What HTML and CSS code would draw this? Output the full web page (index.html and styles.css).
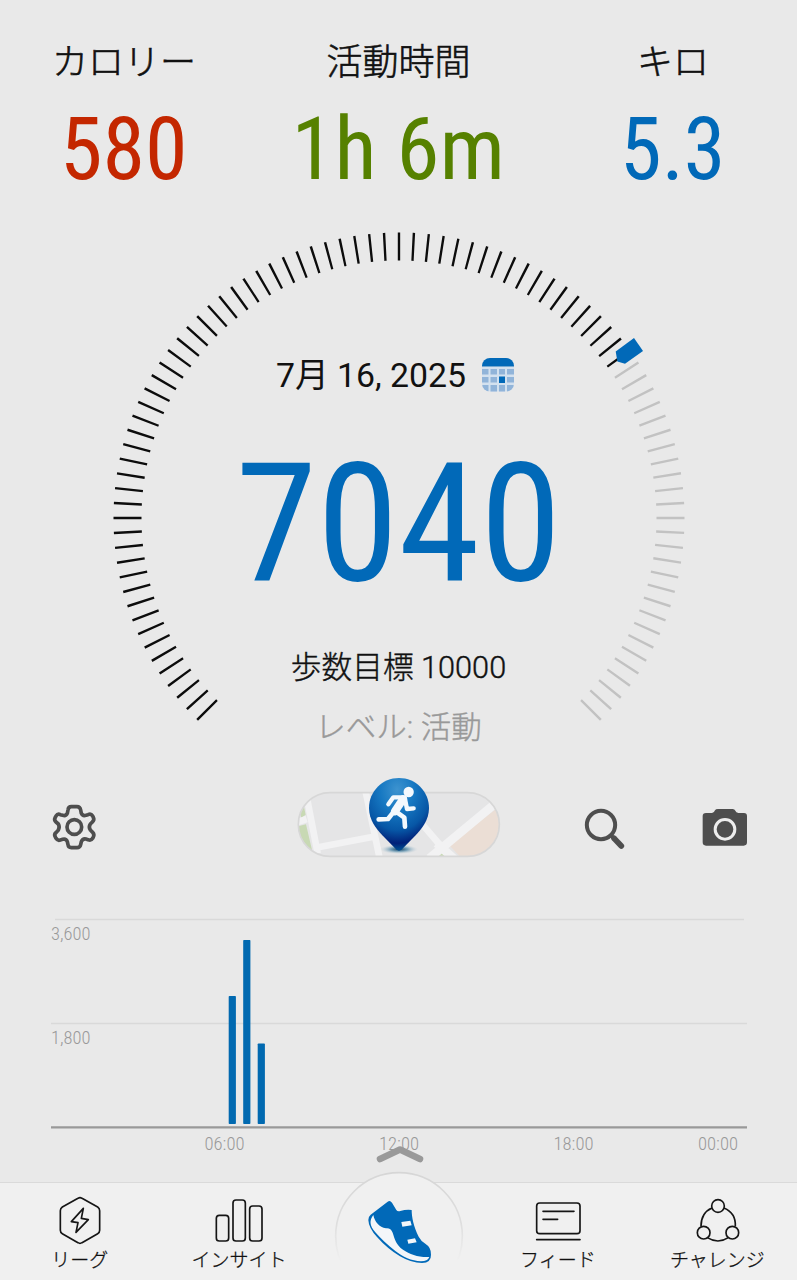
FILE: index.html
```html
<!DOCTYPE html>
<html lang="ja">
<head>
<meta charset="utf-8">
<title>歩数計</title>
<link rel="stylesheet" href="styles.css">
</head>
<body>
<main class="app">
  <header class="stats">
    <div class="stat">
      <div class="stat-label">カロリー</div>
      <svg class="stat-value red" width="240" height="114" viewBox="0 0 240 114"><text x="56" y="86.500" textLength="127.500" lengthAdjust="spacingAndGlyphs">580</text></svg>
    </div>
    <div class="stat">
      <div class="stat-label">活動時間</div>
      <svg class="stat-value green" width="240" height="114" viewBox="0 0 240 114"><text x="12.500" y="86.500" textLength="213.500" lengthAdjust="spacingAndGlyphs">1h 6m</text></svg>
    </div>
    <div class="stat">
      <div class="stat-label">キロ</div>
      <svg class="stat-value blue" width="240" height="114" viewBox="0 0 240 114"><text x="67" y="86.500" textLength="105.500" lengthAdjust="spacingAndGlyphs">5.3</text></svg>
    </div>
  </header>

  <section class="gauge">
    <svg class="gauge-ring" width="797" height="550" viewBox="0 0 797 550">
      <path class="ticks done" pathLength="189.5" d="M207.86 500.82A271.5 271.5 0 1 1 619.34 149.38"/>
      <path class="ticks rest" pathLength="78.5" d="M626.05 159.14A271.5 271.5 0 0 1 590.14 500.82"/>
      <path fill="#0169b8" d="M634 128L643 141L625 153.700L617.400 151.600L615.700 141.500Z"/>
    </svg>
    <div class="gauge-body">
      <div class="date-row">
        <span class="date">7月 16, 2025</span>
        <svg width="34" height="36" viewBox="0 0 34 36">
          <clipPath id="cal"><rect x="1" y="0" width="32" height="33.500" rx="8"/></clipPath>
          <g clip-path="url(#cal)">
            <path fill="#d3e1ef" d="M0 9h34v26H0z"/>
            <path fill="#0169b8" d="M0 0h34v8.500H0z"/>
            <path fill="#91b4d9" d="M1 11h6.500v5.500H1zm8.500 0h6.500v5.500H9.500zm8.500 0h6v5.500h-6zm8 0h7v5.500h-7zM1 19h6.500v5.500H1zm8.500 0h6.500v5.500H9.500zm16.500 0h7v5.500h-7zM1 27h6.500v7H1zm8.500 0h6.500v7H9.500zm8.500 0h6v7h-6zm8 0h7v7h-7z"/>
            <path fill="#0169b8" d="M18 18.500h6v6.500h-6z"/>
          </g>
        </svg>
      </div>
      <svg class="steps" width="360" height="190" viewBox="0 -20 360 190"><text x="16.500" y="134" textLength="326" lengthAdjust="spacingAndGlyphs">7040</text></svg>
      <div class="goal">歩数目標 10000</div>
      <div class="level">レベル: 活動</div>
    </div>
  </section>

  <section class="tools">
    <svg class="gear" width="90" height="80" viewBox="0 0 270 240">
      <path class="tool-line" stroke-width="11" stroke-linejoin="round" d="M114 60Q115 50 124 50H141Q150 50 152 60L154 70Q158 79 168 76L174 74Q183 70 188 78L190 82Q194 90 187 96L181 102Q175 111 181 120L188 127Q194 133 190 141L188 145Q183 153 174 149L168 147Q158 145 154 155L152 164Q150 173 141 173H124Q115 173 114 164L112 155Q108 145 98 148L91 150Q83 153 78 145L76 141Q71 133 79 127L85 120Q90 111 85 102L78 96Q71 90 76 82L78 78Q83 70 91 74L98 76Q108 79 112 70Z"/>
      <circle class="tool-line" cx="133" cy="111" r="22" stroke-width="11"/>
    </svg>
    <svg class="map-pin" width="240" height="105" viewBox="0 0 720 315">
      <defs>
        <clipPath id="pill"><rect x="55" y="83" width="603" height="191" rx="95"/></clipPath>
        <radialGradient id="pin" cx=".47" cy=".16" r=".82"><stop offset="0" stop-color="#3d93cf"/><stop offset=".35" stop-color="#1678c2"/><stop offset=".68" stop-color="#0757a6"/><stop offset=".9" stop-color="#012078"/><stop offset="1" stop-color="#004a8e"/></radialGradient>
        <radialGradient id="shade"><stop offset="0" stop-color="#123b5b"/><stop offset=".45" stop-color="#558ba9" stop-opacity=".75"/><stop offset="1" stop-color="#c3d4dc" stop-opacity="0"/></radialGradient>
      </defs>
      <g clip-path="url(#pill)">
        <path fill="#e5e5e6" d="M50 80h620v200H50z"/>
        <path fill="#c8d9b4" d="M50 185L78 178L96 255H72L50 230ZM60 145L72 126L77 149L64 158ZM462 278L482 258L505 278Z"/>
        <path fill="#ebded5" d="M507 240L665 119V280H545Z"/>
        <path stroke="#f2f2f3" stroke-width="20" fill="none" d="M82 105L113 265M107 248L288 214M256 75L299 280M480 240L420 170"/>
        <path stroke="#f2f2f3" stroke-width="26" fill="none" d="M448 280L644 117M470 235L527 286"/>
        <path stroke="#f2f2f3" stroke-width="20" fill="none" d="M50 172L80 162"/>
      </g>
      <rect x="55" y="83" width="603" height="191" rx="95" fill="none" stroke="#d7d7d7" stroke-width="5"/>
      <ellipse cx="357" cy="253" rx="57" ry="14" fill="url(#shade)"/>
      <path fill="url(#pin)" d="M357 39C307 39 267 79 267 129C267 165 289 191 307 211L348 253Q357 261 366 253L407 211C425 191 447 165 447 129C447 79 407 39 357 39Z"/>
      <circle cx="386" cy="81" r="15.500" fill="#f4f9fd"/>
      <g fill="none" stroke="#f4f9fd" stroke-linecap="round" stroke-linejoin="round">
        <path stroke-width="13" d="M325 118L340 97H374L381 132L401 130"/>
        <path stroke-width="24" d="M369 103L345 139"/>
        <path stroke-width="14" d="M342 139L324 162L296 163M347 139L373 158L375 185"/>
      </g>
    </svg>
    <svg class="search" width="90" height="90" viewBox="0 0 270 270">
      <circle class="tool-line" cx="123" cy="135" r="42.500" stroke-width="12"/>
      <path class="tool-line" d="M154 167L161 174" stroke-width="11"/>
      <path class="tool-line" d="M162 175L184 198" stroke-width="17" stroke-linecap="round"/>
    </svg>
    <svg class="camera" width="90" height="90" viewBox="360 0 270 270">
      <path fill="#4e4e4e" d="M438 99H456Q463 98 465 91Q467 87 474 87H518Q524 87 526 92Q528 98 535 99H552Q561 99 561 108V187Q561 197 551 197H438Q428 197 428 187V108Q428 99 438 99Z"/>
      <circle cx="495" cy="148" r="29.500" fill="none" stroke="#ededed" stroke-width="9"/>
    </svg>
  </section>

  <section class="chart">
    <svg width="797" height="302" viewBox="0 880 797 302">
      <path stroke="#d9d9d9" stroke-width="1.500" d="M55 919.500H744M51 1023.500H747"/>
      <path stroke="#999" stroke-width="2.200" d="M51 1127.400H747"/>
      <g fill="#0169b0">
        <rect x="228.700" y="996" width="7.200" height="128" rx=".8"/>
        <rect x="243.200" y="940" width="7.200" height="184" rx=".8"/>
        <rect x="257.700" y="1043.500" width="7.200" height="80.500" rx=".8"/>
      </g>
      <g class="chart-text">
        <text x="51" y="940.300" textLength="39.500" lengthAdjust="spacingAndGlyphs">3,600</text>
        <text x="51" y="1044" textLength="39.500" lengthAdjust="spacingAndGlyphs">1,800</text>
        <text x="204.500" y="1150" textLength="40" lengthAdjust="spacingAndGlyphs">06:00</text>
        <text x="379" y="1150" textLength="40" lengthAdjust="spacingAndGlyphs">12:00</text>
        <text x="553.500" y="1150" textLength="40" lengthAdjust="spacingAndGlyphs">18:00</text>
        <text x="698" y="1150" textLength="40" lengthAdjust="spacingAndGlyphs">00:00</text>
      </g>
      <path fill="none" stroke="#999" stroke-width="6.500" stroke-linecap="round" stroke-linejoin="round" d="M380 1159L400 1149.500L420 1159"/>
    </svg>
  </section>

  <nav class="nav">
    <a class="tab">
      <svg width="60" height="60" viewBox="150 40 180 180">
        <g class="nav-line">
          <path d="M234 86Q240 82 246 86L293 112Q299 116 299 123V182Q299 189 293 192L246 219Q240 223 234 219L187 192Q181 189 181 182V123Q181 116 187 112Z"/>
          <path d="M250 116L214 156L234 159L228 188L265 150L244 146Z"/>
        </g>
      </svg>
      <span>リーグ</span>
    </a>
    <a class="tab">
      <svg width="60" height="60" viewBox="628 40 180 180">
        <g class="nav-line">
          <rect x="650" y="137" width="37" height="77" rx="9"/>
          <rect x="700" y="91" width="37" height="123" rx="9"/>
          <rect x="750" y="109" width="37" height="105" rx="9"/>
        </g>
      </svg>
      <span>インサイト</span>
    </a>
    <a class="tab home">
      <svg class="home-badge" width="160" height="120" viewBox="0 120 480 360">
        <defs><linearGradient id="ring" x1="0" y1="0" x2="0" y2="1"><stop offset="0" stop-color="#d6d6d6"/><stop offset=".4" stop-color="#dedede"/><stop offset=".7" stop-color="#f0f0f0"/></linearGradient></defs>
        <circle cx="237" cy="348" r="190" fill="#f0f0f0" stroke="url(#ring)" stroke-width="5"/>
        <path fill="#0169b8" d="M145 300Q144 291 152 284L203 245Q210 240 216 248L229 270Q233 276 241 273Q258 268 275 270C275 292 281 320 296 350Q302 362 316 371Q334 382 333 404Q334 428 306 429Q274 429 240 409Q202 386 171 351Q146 324 145 300Z"/>
        <path fill="#f3f6f9" d="M160 285C164 305 178 322 198 325Q212 323 218 338C224 357 229 375 249 389C270 403 297 413 328 411Q323 424 303 424C275 423 248 410 226 393C202 375 181 355 166 337C148 316 148 301 160 285ZM244 306L271 302L275 316L247 320ZM262 359L285 355L290 367L265 371Z"/>
      </svg>
    </a>
    <a class="tab">
      <svg width="60" height="60" viewBox="145 40 180 180">
        <g class="nav-line">
          <rect x="171" y="100" width="130" height="92" rx="9"/>
          <path stroke-linecap="round" d="M190 125H283M190 149H234M171 210H301"/>
        </g>
      </svg>
      <span>フィード</span>
    </a>
    <a class="tab">
      <svg width="60" height="60" viewBox="622 40 180 180">
        <g class="nav-line">
          <path d="M697 115Q664 129 664 170M733 115Q769 130 767 170M683 204Q715 224 746 204"/>
          <circle cx="715" cy="109" r="19"/><circle cx="672" cy="189" r="19"/><circle cx="758" cy="189" r="19"/>
        </g>
      </svg>
      <span>チャレンジ</span>
    </a>
  </nav>
</main>
</body>
</html>
```

FILE: styles.css
```css
* { box-sizing: border-box; }

body {
  margin: 0;
  background: #e9e9e9;
  color: #111;
  font-family: Roboto, "Noto Sans CJK JP", sans-serif;
}

svg { display: block; flex: none; overflow: visible; }

.app {
  width: 797px;
  height: 1280px;
  display: flex;
  flex-direction: column;
  overflow: hidden;
}

.stats {
  height: 210px;
  padding: 32px 0 0 4px;
  display: grid;
  grid-template-columns: 240px 240px 240px;
  column-gap: 34.5px;
}

.stat { display: flex; flex-direction: column; align-items: center; }

.stat-label {
  height: 60px;
  line-height: 55px;
  font-size: 36px;
  font-weight: 300;
  -webkit-text-stroke: .6px #111;
  font-family: "Noto Sans CJK JP", sans-serif;
}

.stat-value { font: 400 86.7px "Roboto Condensed", Roboto, sans-serif; }
.red { fill: #c42700; }
.green { fill: #568100; }
.blue { fill: #0169b8; }

.gauge { height: 550px; display: grid; }
.gauge-ring, .gauge-body { grid-area: 1 / 1; }

.ticks { fill: none; stroke-width: 28; stroke-dasharray: .5 2.5; }
.done { stroke: #0c0c0c; }
.rest { stroke: #c2c2c2; }

.gauge-body {
  display: flex;
  flex-direction: column;
  align-items: center;
  padding-top: 141px;
}

.date-row { height: 50px; display: flex; align-items: center; gap: 15px; padding-right: 6px; }
.date { font-size: 33.8px; line-height: 50px; white-space: nowrap; }
.steps { margin-top: 25px; fill: #0169b8; font: 400 165.5px "Roboto Condensed", Roboto, sans-serif; }
.goal { margin-top: 27px; height: 50px; line-height: 50px; font-size: 30.7px; font-weight: 300; -webkit-text-stroke: .4px #111; }
.level { margin-top: 10px; height: 50px; line-height: 50px; font-size: 30.5px; font-weight: 300; -webkit-text-stroke: .4px #999; color: #999; }

.tools { height: 120px; display: flex; align-items: flex-start; padding-left: 30px; }
.tool-line { fill: none; stroke: #4e4e4e; }
.gear { margin: 30px 160px 0 0; }
.map-pin { margin: 5px 40px 0 0; }
.search { margin: 20px 30px 0 0; }
.camera { margin-top: 20px; }

.chart { height: 302px; }
.chart-text { font: 350 18.7px "Roboto Condensed", Roboto, sans-serif; fill: #999; }

.nav {
  height: 98px;
  display: grid;
  grid-template-columns: repeat(5, 1fr);
  background: #f0f0f0;
  border-top: 1px solid #dadada;
}

.tab {
  display: flex;
  flex-direction: column;
  align-items: center;
  font: 300 19px/28px "Noto Sans CJK JP", sans-serif;
}

.tab span { margin-top: 2px; white-space: nowrap; -webkit-text-stroke: .3px #111; }
.nav-line { fill: none; stroke: #151515; stroke-width: 5; stroke-linejoin: round; }
.home { position: relative; }
.home-badge { position: absolute; left: 1px; top: -23px; }
```
